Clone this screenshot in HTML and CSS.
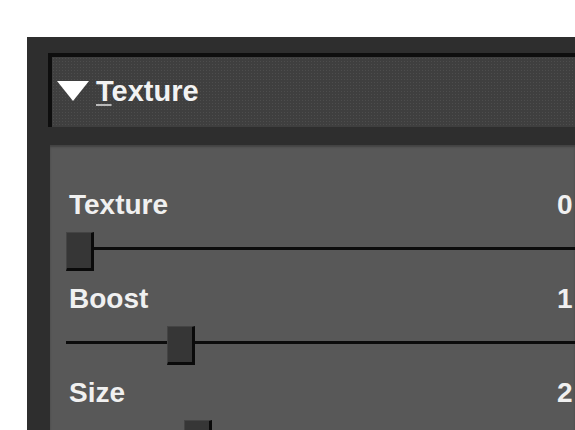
FILE: index.html
```html
<!DOCTYPE html>
<html lang="en">
<head>
    <meta charset="UTF-8">
    <meta name="viewport" content="width=device-width, initial-scale=1.0">
    <title>Texture</title>
    <link rel="stylesheet" href="styles.css">
</head>
<body>
    <div class="panel">
        <div class="section-header">
            <span class="disclosure"></span>
            <span class="section-title"><u>T</u>exture</span>
        </div>
        <div class="section-body">
            <div class="control">
                <div class="control-head">
                    <span class="control-label">Texture</span>
                    <span class="control-value">0</span>
                </div>
                <div class="slider">
                    <div class="slider-track"></div>
                    <div class="slider-thumb" style="left: 16px"></div>
                </div>
            </div>
            <div class="control">
                <div class="control-head">
                    <span class="control-label">Boost</span>
                    <span class="control-value">1</span>
                </div>
                <div class="slider">
                    <div class="slider-track"></div>
                    <div class="slider-thumb" style="left: 117px"></div>
                </div>
            </div>
            <div class="control">
                <div class="control-head">
                    <span class="control-label">Size</span>
                    <span class="control-value">2</span>
                </div>
                <div class="slider">
                    <div class="slider-track"></div>
                    <div class="slider-thumb" style="left: 134px"></div>
                </div>
            </div>
        </div>
    </div>
</body>
</html>
```

FILE: styles.css
```css
html, body {
    margin: 0;
    height: 100%;
    overflow: hidden;
}

body {
    background: #fff;
    font-family: 'Liberation Sans', Arial, sans-serif;
    padding: 37px 0 0 27px;
    box-sizing: border-box;
}

.panel {
    background: #2e2e2e;
    height: 100%;
    padding: 16px 0 0 21px;
    box-sizing: border-box;
    display: flex;
    flex-direction: column;
}

.section-header {
    height: 74px;
    flex-shrink: 0;
    box-sizing: border-box;
    border-top: 4px solid #0e0e0e;
    border-left: 4px solid #0e0e0e;
    background-color: #3f3f3f;
    background-image: radial-gradient(rgba(255,255,255,0.07) 0.8px, transparent 1px);
    background-size: 3px 3px;
    display: flex;
    align-items: center;
    padding-left: 5px;
    padding-bottom: 2px;
}

.disclosure {
    width: 0;
    height: 0;
    border-left: 16px solid transparent;
    border-right: 16px solid transparent;
    border-top: 20px solid #fff;
    margin-right: 7px;
}

.section-title {
    color: #f2f2f2;
    font-size: 29px;
    font-weight: bold;
}

.section-title u {
    text-decoration-color: #b8b8b8;
    text-underline-offset: 3px;
    text-decoration-thickness: 2px;
}

.section-body {
    flex: 1;
    overflow: hidden;
    margin-top: 18px;
    margin-left: 2px;
    background: #585858;
    box-shadow: inset 0 2px 2px rgba(0,0,0,0.25);
    padding-top: 44px;
}

.control-head {
    display: flex;
    height: 32px;
    line-height: 32px;
    font-size: 28px;
    font-weight: bold;
    color: #f0f0f0;
}

.control-label {
    width: 488px;
    padding-left: 19px;
    flex-shrink: 0;
}

.slider {
    position: relative;
    height: 62px;
}

.slider-track {
    position: absolute;
    left: 16px;
    right: 0;
    top: 26px;
    height: 3px;
    background: #0c0c0c;
}

.slider-thumb {
    position: absolute;
    top: 11px;
    width: 28px;
    height: 39px;
    box-sizing: border-box;
    background: #363636;
    border-top: 1px solid #444;
    border-left: 1px solid #444;
    border-right: 3px solid #0a0a0a;
    border-bottom: 3px solid #0a0a0a;
}
```
